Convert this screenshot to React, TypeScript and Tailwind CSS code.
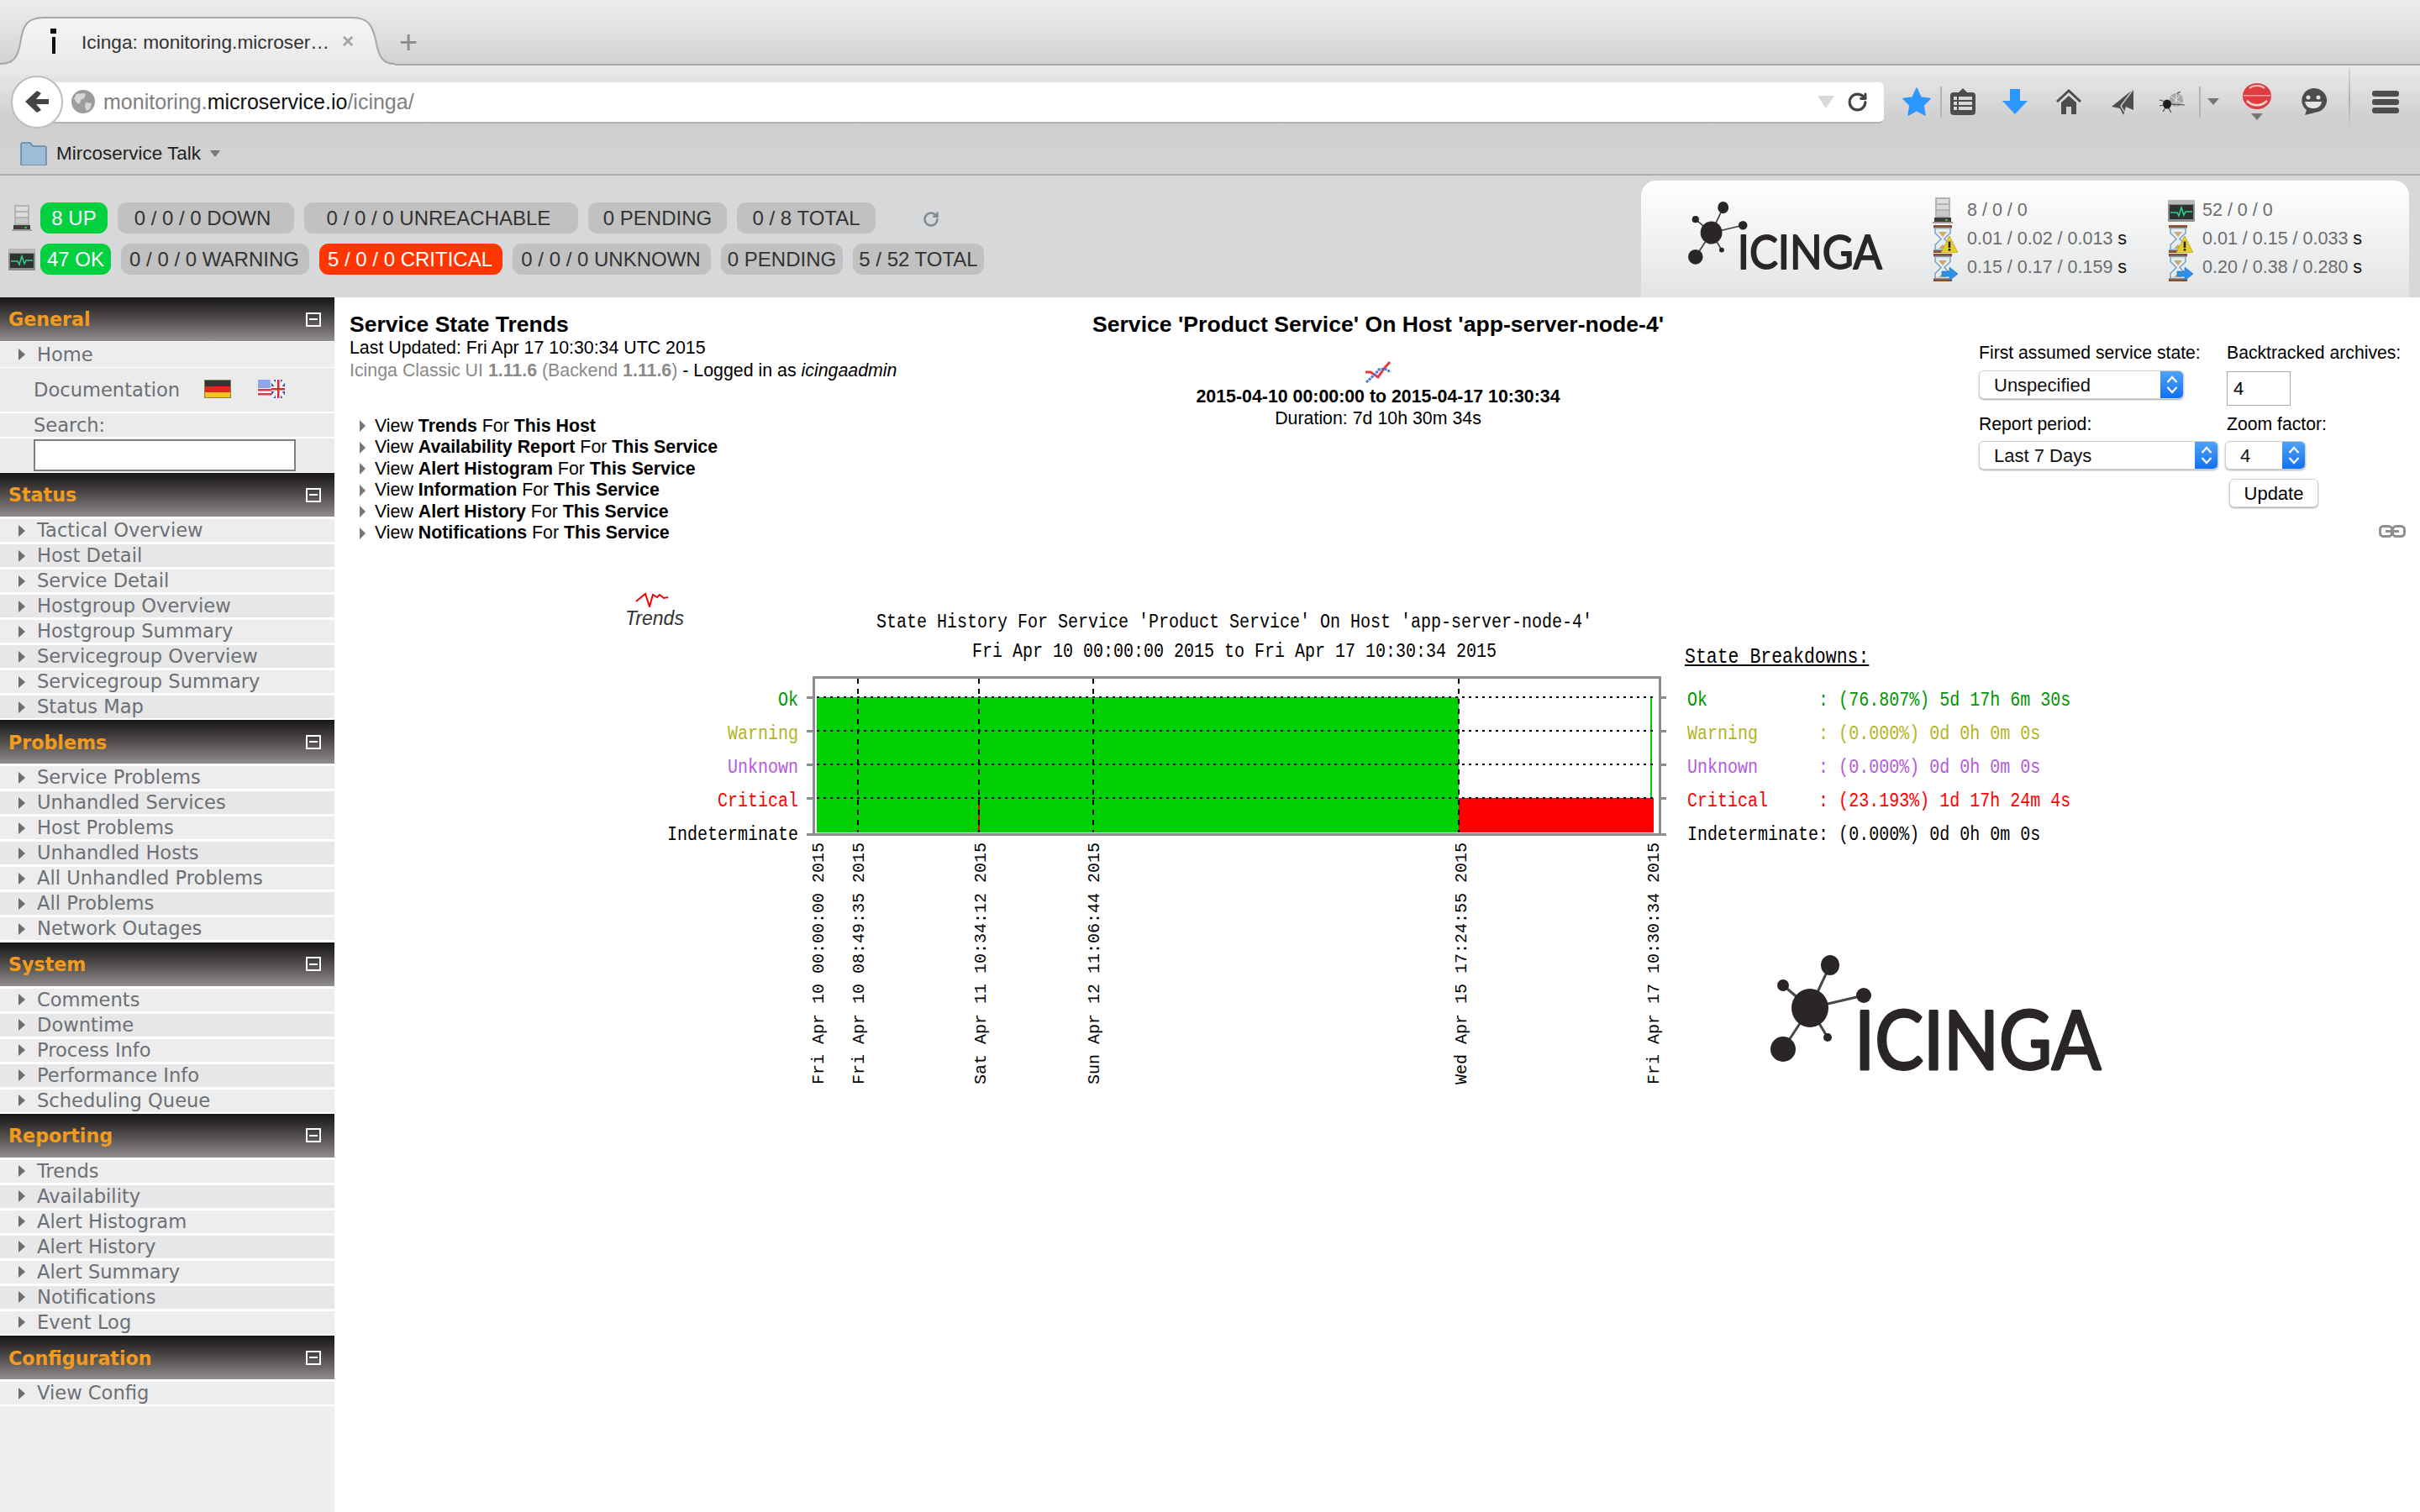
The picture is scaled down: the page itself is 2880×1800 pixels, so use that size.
import { RotateCw } from "lucide-react";

const menu = [
  { title: "Status", items: ["Tactical Overview", "Host Detail", "Service Detail", "Hostgroup Overview", "Hostgroup Summary", "Servicegroup Overview", "Servicegroup Summary", "Status Map"] },
  { title: "Problems", items: ["Service Problems", "Unhandled Services", "Host Problems", "Unhandled Hosts", "All Unhandled Problems", "All Problems", "Network Outages"] },
  { title: "System", items: ["Comments", "Downtime", "Process Info", "Performance Info", "Scheduling Queue"] },
  { title: "Reporting", items: ["Trends", "Availability", "Alert Histogram", "Alert History", "Alert Summary", "Notifications", "Event Log"] },
  { title: "Configuration", items: ["View Config"] },
];

const hostPills = [
  { label: "0 / 0 / 0 DOWN", w: "w-[210px] pr-[8px]" },
  { label: "0 / 0 / 0 UNREACHABLE", w: "w-[326px] pr-[6px]" },
  { label: "0 PENDING", w: "w-[165px]" },
  { label: "0 / 8 TOTAL", w: "w-[165px]" },
];

const links = [
  ["Trends", "This Host"],
  ["Availability Report", "This Service"],
  ["Alert Histogram", "This Service"],
  ["Information", "This Service"],
  ["Alert History", "This Service"],
  ["Notifications", "This Service"],
];

const yLabels = [
  { text: "Ok", y: 833, fill: "#009600" },
  { text: "Warning", y: 873, fill: "#b4b41e" },
  { text: "Unknown", y: 913, fill: "#b45adc" },
  { text: "Critical", y: 953, fill: "#ff0000" },
  { text: "Indeterminate", y: 993, fill: "#000000" },
];

const xLabels = [
  { x: 974, text: "Fri Apr 10 00:00:00 2015" },
  { x: 1022, text: "Fri Apr 10 08:49:35 2015" },
  { x: 1167, text: "Sat Apr 11 10:34:12 2015" },
  { x: 1302, text: "Sun Apr 12 11:06:44 2015" },
  { x: 1739, text: "Wed Apr 15 17:24:55 2015" },
  { x: 1968, text: "Fri Apr 17 10:30:34 2015" },
];

const breakdown = [
  { text: "Ok           : (76.807%) 5d 17h 6m 30s", color: "text-[#009600]" },
  { text: "Warning      : (0.000%) 0d 0h 0m 0s", color: "text-[#b4b41e]" },
  { text: "Unknown      : (0.000%) 0d 0h 0m 0s", color: "text-[#b45adc]" },
  { text: "Critical     : (23.193%) 1d 17h 24m 4s", color: "text-[#ff0000]" },
  { text: "Indeterminate: (0.000%) 0d 0h 0m 0s", color: "text-black" },
];

function IcingaLogo({ className }: { className: string }) {
  return (
    <svg viewBox="0 0 395 165" className={className}>
      <g stroke="#4a4647" strokeWidth="3">
        <line x1="47" y1="63" x2="71" y2="12" />
        <line x1="47" y1="63" x2="111" y2="48" />
        <line x1="47" y1="63" x2="15" y2="36" />
        <line x1="47" y1="63" x2="15" y2="112" />
        <line x1="47" y1="63" x2="68" y2="98" />
      </g>
      <g fill="#2a2627">
        <ellipse cx="47" cy="63" rx="22" ry="23" />
        <ellipse cx="71" cy="12" rx="11" ry="12" />
        <ellipse cx="111" cy="48" rx="9" ry="9" />
        <ellipse cx="15" cy="36" rx="7" ry="7" />
        <ellipse cx="15" cy="112" rx="15" ry="15" />
        <ellipse cx="68" cy="98" rx="5" ry="5" />
      </g>
      <text transform="translate(100 136) scale(0.9 1)" fontFamily="Lato, 'Liberation Sans', sans-serif" fontSize="96" fill="#2a2627" stroke="#2a2627" strokeWidth="3" strokeLinejoin="round">
        ICINGA
      </text>
    </svg>
  );
}

function ServerIcon() {
  return (
    <svg viewBox="0 0 24 31" className="w-[24px] h-[31px]">
      <rect x="3" y="0" width="18" height="27" fill="#b4b4b4" />
      <rect x="5" y="2" width="14" height="5" fill="#dcdcdc" />
      <rect x="5" y="9" width="14" height="5" fill="#dcdcdc" />
      <rect x="5" y="16" width="14" height="6" fill="#cacaca" />
      <rect x="2" y="24" width="20" height="5" fill="#3d3d3d" />
      <rect x="15" y="26" width="3" height="2" fill="#26c244" />
      <rect x="0" y="29" width="24" height="2" fill="#a0a0a0" />
    </svg>
  );
}

function MonitorIcon() {
  return (
    <svg viewBox="0 0 32 26" className="w-[32px] h-[26px]">
      <rect x="0" y="0" width="32" height="26" rx="1" fill="#8d8d8d" />
      <rect x="0" y="0" width="32" height="5" fill="#b8b8b8" />
      <rect x="2" y="6" width="28" height="17" fill="#2c3331" />
      <polyline points="3,15 11,15 13,19 16,9 19,18 21,14 29,14" fill="none" stroke="#35d28c" strokeWidth="1.5" />
    </svg>
  );
}

function Hourglass({ badge }: { badge: "warn" | "arrow" }) {
  return (
    <svg viewBox="0 0 30 33" className="w-[30px] h-[33px]">
      <rect x="1" y="0" width="22" height="3.500" fill="#8a4f2d" />
      <rect x="1" y="29.500" width="22" height="3.500" fill="#8a4f2d" />
      <path d="M3 3.500h18v6l-7 7 7 7v6H3v-6l7-7-7-7z" fill="#e3edf4" stroke="#7fa0bd" strokeWidth="1.500" />
      <path d="M7 8h10l-5 6z" fill="#d2a566" />
      <path d="M7 28h10l-5-5z" fill="#d2a566" />
      {badge === "warn" ? (
        <g>
          <path d="M20 13l10 20H10z" fill="#e8cf2a" stroke="#b79d12" strokeWidth="0.8" />
          <rect x="18.700" y="19.500" width="2.600" height="7.500" fill="#222222" />
          <rect x="18.700" y="28" width="2.600" height="2.600" fill="#222222" />
        </g>
      ) : (
        <path d="M11 21h9v-5l10 8-10 8v-5h-9z" fill="#2f8fe6" stroke="#1d6fbd" strokeWidth="0.6" />
      )}
    </svg>
  );
}

function Pill({ label, w, tone = "gray" }: { label: string; w: string; tone?: "gray" | "green" | "red" }) {
  const color = tone === "green" ? "bg-[#03d03f] text-white" : tone === "red" ? "bg-[#ff3600] text-white" : "bg-[#c1c1c2] text-[#333333]";
  return <div className={`${w} h-[37px] rounded-[11px] flex items-center justify-center text-[24px] whitespace-nowrap ${color}`}>{label}</div>;
}

function ToolbarIcons() {
  return (
    <div className="flex items-center">
      <svg viewBox="0 0 34 34" className="w-[34px] h-[34px] ml-[22px]">
        <path d="M17 1l5 11 11 1.500-8 8 2 11.500-10-5.500-10 5.500 2-11.500-8-8L12 12z" fill="#2b97ff" stroke="#2b97ff" strokeLinejoin="round" strokeWidth="1.500" />
      </svg>
      <div className="w-[2px] h-[37px] ml-[11px] bg-[#b5b5b5]" />
      <svg viewBox="0 0 30 32" className="w-[30px] h-[32px] ml-[10px]">
        <path d="M15 0l5 5h6a4 4 0 0 1 4 4v19a4 4 0 0 1-4 4H4a4 4 0 0 1-4-4V9a4 4 0 0 1 4-4h6z" fill="#4d4d4d" />
        <g fill="#d8d8d8">
          <rect x="4" y="10" width="4" height="4" />
          <rect x="10" y="10" width="16" height="4" />
          <rect x="4" y="16" width="4" height="4" />
          <rect x="10" y="16" width="16" height="4" />
          <rect x="4" y="22" width="4" height="4" />
          <rect x="10" y="22" width="16" height="4" />
        </g>
      </svg>
      <svg viewBox="0 0 30 30" className="w-[30px] h-[30px] ml-[32px]">
        <path d="M9 0h12v14h9L15 30 0 14h9z" fill="#2b97ff" />
      </svg>
      <svg viewBox="0 0 30 30" className="w-[30px] h-[30px] ml-[34px]">
        <path d="M15 0L30 14l-2 2L15 4 2 16l-2-2z" fill="#4d4d4d" />
        <path d="M15 8l9 8v14h-6V21h-6v9H6V16z" fill="#4d4d4d" />
      </svg>
      <svg viewBox="0 0 32 32" className="w-[32px] h-[32px] ml-[34px]">
        <path d="M28 1L2 22l10 2 4 8 3-10 9 4z" fill="#4d4d4d" />
        <path d="M28 1L13 21l4 7" fill="none" stroke="#cfcfcf" strokeWidth="1.500" />
      </svg>
      <svg viewBox="0 0 32 25" className="w-[32px] h-[25px] ml-[26px]">
        <ellipse cx="21" cy="10" rx="8" ry="8" fill="#a8a8a8" />
        <path d="M15 6l12 8M17 14l8-9M21 3v14" stroke="#e8e8e8" strokeWidth="1" />
        <ellipse cx="10" cy="15" rx="5" ry="5.500" fill="#1c1c1c" />
        <g stroke="#444444" strokeWidth="1.200" fill="none">
          <path d="M8 12L1 10M6 16l-5 1M8 19l-3 5M12 20l3 5M14 15l17 1M22 2l4-2" />
        </g>
      </svg>
      <div className="w-[2px] h-[37px] ml-[16px] bg-[#b5b5b5]" />
      <div className="ml-[8px] w-0 h-0 border-x-[7px] border-x-transparent border-t-[8px] border-t-[#777777]" />
      <div className="ml-[28px] w-[34px] flex flex-col items-center gap-[5px]">
        <svg viewBox="0 0 34 31" className="w-[34px] h-[31px]">
          <ellipse cx="17" cy="15.500" rx="17" ry="15.500" fill="#df3c40" />
          <path d="M8 6c5-4 13-4 18 0" fill="none" stroke="#f4c2c3" strokeWidth="2" />
          <path d="M5 21c7 7 17 7 24 0" fill="none" stroke="#f6d4d5" strokeWidth="2.500" />
          <rect x="1" y="14" width="32" height="1.500" fill="#eda0a2" />
        </svg>
        <div className="w-0 h-0 border-x-[7px] border-x-transparent border-t-[8px] border-t-[#777777]" />
      </div>
      <svg viewBox="0 0 34 32" className="w-[34px] h-[32px] ml-[33px]">
        <path d="M17 0a16 14.500 0 0 1 6 28L7 32l2-6A14.500 14.500 0 0 1 17 0z" fill="#4d4d4d" />
        <circle cx="11" cy="11" r="2.500" fill="#e4e4e4" />
        <circle cx="23" cy="11" r="2.500" fill="#e4e4e4" />
        <path d="M7 16h20c-1 6-5 8-10 8s-9-2-10-8z" fill="#e4e4e4" />
      </svg>
      <div className="w-[2px] h-[80px] ml-[25px] bg-linear-to-b from-[#d5d5d5] via-[#b0b0b0] to-[#d5d5d5]" />
      <div className="w-[32px] ml-[26px] flex flex-col gap-[3px]">
        <div className="h-[7px] rounded-[3px] bg-[#4d4d4d]" />
        <div className="h-[7px] rounded-[3px] bg-[#4d4d4d]" />
        <div className="h-[7px] rounded-[3px] bg-[#4d4d4d]" />
      </div>
    </div>
  );
}

function BrowserChrome() {
  return (
    <div className="font-['Liberation_Sans',sans-serif]">
      {/* tab strip */}
      <div className="h-[78px] flex items-end border-b-2 border-[#a9a9a9] bg-linear-to-b from-[#ededed] to-[#d3d3d3]">
        <div className="relative w-[470px] h-[58px] -mb-[2px] flex items-center">
          <svg viewBox="0 0 470 58" className="absolute inset-0 w-full h-full">
            <defs>
              <linearGradient id="tabFill" x1="0" y1="0" x2="0" y2="1">
                <stop offset="0" stopColor="#f5f5f5" />
                <stop offset="1" stopColor="#e9e9e9" />
              </linearGradient>
            </defs>
            <path d="M0 56c16 0 21-8 24-24C27 10 32 1 52 1h368c18 0 24 9 28 31 3 16 8 24 22 24v2H0z" fill="url(#tabFill)" />
            <path d="M0 56c16 0 21-8 24-24C27 10 32 1 52 1h368c18 0 24 9 28 31 3 16 8 24 22 24" fill="none" stroke="#a8a8a8" strokeWidth="2" />
          </svg>
          <svg viewBox="0 0 10 30" className="relative ml-[59px] w-[10px] h-[30px]">
            <rect x="1" y="0" width="7" height="6" fill="#111111" />
            <rect x="3" y="10" width="4" height="20" fill="#111111" />
          </svg>
          <span className="relative ml-[28px] mt-[3px] text-[22.700px] text-[#333333] whitespace-nowrap">Icinga: monitoring.microser…</span>
          <span className="relative ml-[15px] text-[24px] font-bold text-[#a3a3a3]">×</span>
        </div>
        <span className="ml-[5px] mb-[4px] text-[38px] leading-[44px] text-[#8c8c8c]">+</span>
      </div>

      {/* nav + bookmarks */}
      <div className="h-[131px] border-b-[2px] border-[#adadad] bg-linear-to-b from-[#ebebeb] via-[#cfcfcf] to-[#d3d3d3]">
        <div className="h-[86px] flex items-center">
          <div className="relative z-10 ml-[13px] w-[62px] h-[63px] rounded-full bg-white border-2 border-[#bdbdbd] flex items-center justify-center">
            <svg viewBox="0 0 28 26" className="w-[28px] h-[26px]">
              <path d="M14 0l5 3-6 7h15v6H13l6 7-5 3L0 13z" fill="#444444" />
            </svg>
          </div>
          <div className="-ml-[15px] mt-[2px] w-[2182px] h-[49px] bg-white rounded-r-[6px] border-b-2 border-[#b3b3b3] flex items-center pl-[25px] pr-[19px]">
            <svg viewBox="0 0 28 28" className="w-[28px] h-[28px]">
              <circle cx="14" cy="14" r="14" fill="#9c9c9c" />
              <path d="M6 5c4 0 8-2 11 0l-2 5-4 2-1 5-4-2-3-5zM17 15l7 1-2 7-4 2-2-5z" fill="#d8d8d8" />
            </svg>
            <span className="ml-[10px] mt-[2px] text-[25px] whitespace-nowrap text-[#808080]">
              monitoring.<span className="text-[#111111]">microservice.io</span>/icinga/
            </span>
            <div className="ml-auto w-0 h-0 border-x-[10px] border-x-transparent border-t-[15px] border-t-[#d9d9d9]" />
            <RotateCw className="ml-[15px] w-[25px] h-[25px] text-[#444444]" strokeWidth={3} />
          </div>
          <ToolbarIcons />
        </div>
        <div className="h-[38px] flex items-center pl-[24px]">
          <svg viewBox="0 0 32 28" className="w-[32px] h-[28px]">
            <path d="M1 3a2 2 0 0 1 2-2h9l3 4h14a2 2 0 0 1 2 2v19a2 2 0 0 1-2 2H3a2 2 0 0 1-2-2z" fill="#9dbcd6" stroke="#5f87a8" strokeWidth="1.500" />
          </svg>
          <span className="ml-[11px] text-[22.500px] text-[#222222] whitespace-nowrap">Mircoservice Talk</span>
          <div className="ml-[11px] w-0 h-0 border-x-[6px] border-x-transparent border-t-[8px] border-t-[#777777]" />
        </div>
      </div>
    </div>
  );
}

function StatusStat({ icon, first, rows }: { icon: React.ReactNode; first: string; rows: { badge: "warn" | "arrow"; text: string }[] }) {
  return (
    <div className="w-[280px] flex flex-col">
      <div className="h-[33px] flex items-center">
        <div className="w-[41px]">{icon}</div>
        <span className="text-[21.500px] text-[#6d6d6d] whitespace-nowrap">{first}</span>
      </div>
      {rows.map((r) => (
        <div key={r.text} className="h-[34px] flex items-center">
          <div className="w-[41px] flex items-center">
            <Hourglass badge={r.badge} />
          </div>
          <span className="text-[21.500px] text-[#6d6d6d] whitespace-nowrap">
            {r.text} <span className="text-[#111111]">s</span>
          </span>
        </div>
      ))}
    </div>
  );
}

function StatusBar() {
  return (
    <div className="h-[145px] flex bg-[#d7d8da] font-['Liberation_Sans',sans-serif]">
      <div className="pt-[32px] flex flex-col gap-[12px]">
        <div className="h-[37px] flex items-center">
          <div className="w-[48px] pl-[14px]">
            <ServerIcon />
          </div>
          <div className="flex gap-[12px]">
            <Pill label="8 UP" w="w-[80px]" tone="green" />
            {hostPills.map((p) => (
              <Pill key={p.label} label={p.label} w={p.w} />
            ))}
          </div>
          <RotateCw className="ml-[56px] mt-[3px] w-[20px] h-[20px] text-[#7d8a92]" strokeWidth={3} />
        </div>
        <div className="h-[37px] flex items-center">
          <div className="w-[48px] pl-[10px]">
            <MonitorIcon />
          </div>
          <div className="flex gap-[12px]">
            <Pill label="47 OK" w="w-[84px]" tone="green" />
            <Pill label="0 / 0 / 0 WARNING" w="w-[224px] pr-[2px]" />
            <Pill label="5 / 0 / 0 CRITICAL" w="w-[218px] pr-[2px]" tone="red" />
            <Pill label="0 / 0 / 0 UNKNOWN" w="w-[236px] pr-[2px]" />
            <Pill label="0 PENDING" w="w-[145px]" />
            <Pill label="5 / 52 TOTAL" w="w-[156px]" />
          </div>
        </div>
      </div>
      <div className="ml-auto mr-[13px] mt-[6px] w-[914px] rounded-t-[18px] bg-linear-to-b from-[#ffffff] to-[#e2e4e6] flex pl-[56px] pt-[19px]">
        <IcingaLogo className="w-[232px] h-[97px] mt-[6px] shrink-0" />
        <div className="ml-[59px] flex">
          <StatusStat
            icon={<ServerIcon />}
            first="8 / 0 / 0"
            rows={[
              { badge: "warn", text: "0.01 / 0.02 / 0.013" },
              { badge: "arrow", text: "0.15 / 0.17 / 0.159" },
            ]}
          />
          <StatusStat
            icon={<MonitorIcon />}
            first="52 / 0 / 0"
            rows={[
              { badge: "warn", text: "0.01 / 0.15 / 0.033" },
              { badge: "arrow", text: "0.20 / 0.38 / 0.280" },
            ]}
          />
        </div>
      </div>
    </div>
  );
}

function MenuHeader({ title }: { title: string }) {
  return (
    <div className="h-[52px] flex items-center pl-[10px] pr-[16px] bg-linear-to-b from-[#191616] to-[#918d8d]">
      <span className="mt-[2px] text-[22.200px] font-bold text-[#f39b1c]">{title}</span>
      <div className="ml-auto w-[18px] h-[17px] border-[2px] border-white flex items-center justify-center">
        <div className="w-[10px] h-[2px] bg-white" />
      </div>
    </div>
  );
}

function MenuTriangle() {
  return <div className="w-0 h-0 border-y-[7px] border-y-transparent border-l-[8px] border-l-[#6e6e6e]" />;
}

function MenuItem({ label, odd }: { label: string; odd: boolean }) {
  return (
    <div className={`mt-[3px] h-[27px] flex items-center pl-[22px] ${odd ? "bg-[#e7e7e7]" : "bg-[#ededed]"}`}>
      <MenuTriangle />
      <span className="ml-[14px] mt-[1px] text-[22.600px] text-[#6c7076] whitespace-nowrap">{label}</span>
    </div>
  );
}

function Sidebar() {
  return (
    <div className="w-[398px] shrink-0 flex flex-col bg-white font-['DejaVu_Sans',sans-serif]">
      <MenuHeader title="General" />
      <div className="mt-px h-[30px] flex items-center pl-[22px] bg-[#ededed]">
        <MenuTriangle />
        <span className="ml-[14px] mt-[2px] text-[22.600px] text-[#6c7076]">Home</span>
      </div>
      <div className="mt-px h-[52px] flex items-center pl-[40px] bg-[#ebebeb]">
        <span className="w-[203px] mt-[2px] text-[22.600px] text-[#6c7076]">Documentation</span>
        <svg viewBox="0 0 32 22" className="-mt-[2px] w-[32px] h-[22px]">
          <rect width="32" height="8" fill="#333333" />
          <rect y="8" width="32" height="7" fill="#e0271e" />
          <rect y="15" width="32" height="7" fill="#f2c31d" />
          <rect width="32" height="22" fill="none" stroke="#85805a" strokeWidth="2" />
        </svg>
        <svg viewBox="0 0 32 22" className="ml-[32px] -mt-[2px] w-[32px] h-[22px]">
          <rect width="32" height="22" fill="#eeeef4" />
          <g fill="#d0404a">
            <rect y="11" width="16" height="2.500" />
            <rect y="16" width="16" height="2.500" />
          </g>
          <rect width="15" height="10" fill="#8fa6e8" />
          <rect x="16" width="16" height="22" fill="#3c4c9c" />
          <path d="M16 0l16 22M32 0L16 22" stroke="#f2f2f2" strokeWidth="4" />
          <rect x="21" width="6" height="22" fill="#f2f2f2" />
          <rect x="16" y="8" width="16" height="6" fill="#f2f2f2" />
          <rect x="23" width="2.500" height="22" fill="#d0303a" />
          <rect x="16" y="10" width="16" height="2.500" fill="#d0303a" />
        </svg>
      </div>
      <div className="mt-[2px] h-[28px] flex items-center pl-[40px] bg-[#ebebeb]">
        <span className="mt-[2px] text-[22.600px] text-[#6c7076]">Search:</span>
      </div>
      <div className="mt-[2px] h-[40px] flex items-center pl-[40px] bg-[#ebebeb]">
        <div className="w-[312px] h-[38px] bg-white border-[2px] border-[#808080]" />
      </div>
      <div className="h-px" />
      {menu.map((section) => (
        <div key={section.title} className="pb-[2.300px]">
          <MenuHeader title={section.title} />
          {section.items.map((item, i) => (
            <MenuItem key={item} label={item} odd={i % 2 === 1} />
          ))}
        </div>
      ))}
      <div className="flex-1 bg-[#eeeeee]" />
    </div>
  );
}

function SelectBox({ label, w }: { label: string; w: string }) {
  return (
    <div className={`${w} h-[34px] flex rounded-[6px] bg-white border border-[#d2d2d2] shadow-[0_1px_2px_rgba(0,0,0,0.35)] overflow-hidden`}>
      <span className="flex-1 flex items-center pl-[17px] pt-[2px] text-[22px] text-[#111111]">{label}</span>
      <div className="w-[27px] flex items-center justify-center bg-linear-to-b from-[#4da2f8] to-[#1070f0]">
        <svg viewBox="0 0 14 24" className="w-[14px] h-[24px]">
          <path d="M1.500 9L7 3l5.500 6M1.500 15L7 21l5.500-6" fill="none" stroke="#ffffff" strokeWidth="2.200" />
        </svg>
      </div>
    </div>
  );
}

function TrendsLogo() {
  return (
    <div className="relative z-10 w-[50px] shrink-0 flex flex-col">
      <svg viewBox="0 0 100 18" className="w-[100px] h-[18px] max-w-none mt-[5px] shrink-0">
        <polyline points="27,11 33,6 38,2 43,17 47,3 52,6 55,3 60,7 65,6" fill="none" stroke="#f00000" strokeWidth="2" />
      </svg>
      <span className="pl-[14px] text-[23px] leading-[26px] italic text-[#333333] whitespace-nowrap">Trends</span>
    </div>
  );
}

function Chart() {
  return (
    <svg viewBox="780 700 1210 600" className="w-[1210px] h-[600px] shrink-0" fontFamily="'Liberation Mono', monospace" fontSize="23">
      <text transform="translate(1469 747) scale(0.87 1)" textAnchor="middle">State History For Service 'Product Service' On Host 'app-server-node-4'</text>
      <text transform="translate(1469 782) scale(0.87 1)" textAnchor="middle">Fri Apr 10 00:00:00 2015 to Fri Apr 17 10:30:34 2015</text>

      <rect x="972" y="830" width="764" height="161" fill="#00d000" />
      <rect x="1736" y="950" width="232" height="41" fill="#ff0000" />
      <rect x="1964" y="830" width="2" height="120" fill="#00d000" />
      <rect x="1164" y="950" width="2" height="41" fill="#ff0000" />

      <g stroke="#8c8c8c" strokeWidth="3" fill="none" shapeRendering="crispEdges">
        <rect x="968" y="806" width="1007" height="187" />
        <path d="M960 830h8M960 870h8M960 910h8M960 950h8M960 993h8M1975 830h8M1975 870h8M1975 910h8M1975 950h8M1975 993h8" />
      </g>
      <g stroke="#000000" strokeWidth="2" shapeRendering="crispEdges">
        {[830, 870, 910, 950].map((y) => (
          <line key={y} x1="972" x2="1968" y1={y} y2={y} strokeDasharray="3 5" />
        ))}
        {[1021, 1165, 1301, 1736].map((x) => (
          <line key={x} x1={x} x2={x} y1="808" y2="991" strokeDasharray="6 6" />
        ))}
      </g>

      {yLabels.map((l) => (
        <text key={l.text} transform={`translate(950 ${l.y + 7}) scale(0.87 1)`} textAnchor="end" fill={l.fill}>{l.text}</text>
      ))}
      <g fontSize="20">
        {xLabels.map((l) => (
          <text key={l.x} transform={`translate(${l.x + 6} 1291) rotate(-90)`}>{l.text}</text>
        ))}
      </g>
    </svg>
  );
}

function MainContent() {
  return (
    <div className="flex-1 flex flex-col bg-white text-black font-['Liberation_Sans',sans-serif]">
      <div className="h-[346px] flex">
        <div className="w-[901px] shrink-0 pl-[18px] pt-[16px]">
          <div className="text-[26.500px] leading-[32px] font-bold">Service State Trends</div>
          <div className="-mt-[1.500px] text-[21.350px] leading-[27px]">Last Updated: Fri Apr 17 10:30:34 UTC 2015</div>
          <div className="text-[21.350px] leading-[27px] text-[#8a8a8a]">
            Icinga Classic UI <b>1.11.6</b> (Backend <b>1.11.6</b>) <span className="text-black">- Logged in as <i>icingaadmin</i></span>
          </div>
          <div className="mt-[40px]">
            {links.map(([what, target]) => (
              <div key={what} className="h-[25.500px] flex items-center text-[21.350px] leading-[25.500px]">
                <div className="ml-[12px] mr-[11px] w-0 h-0 border-y-[7px] border-y-transparent border-l-[7px] border-l-[#777777]" />
                View&nbsp;<b>{what}</b>&nbsp;For&nbsp;<b>{target}</b>
              </div>
            ))}
          </div>
        </div>

        <div className="w-[682px] shrink-0 pt-[16px] flex flex-col items-center">
          <div className="text-[26.600px] leading-[32px] font-bold whitespace-nowrap">Service 'Product Service' On Host 'app-server-node-4'</div>
          <svg viewBox="0 0 32 26" className="w-[32px] h-[26px] mt-[28px]">
            <polyline points="1,13 7,13 16,19 23,9 30,1" fill="none" stroke="#ef3340" strokeWidth="3" />
            <polyline points="2,25 12,16 17,10 24,9 31,13" fill="none" stroke="#4a78c8" strokeWidth="3" strokeDasharray="3 1" />
          </svg>
          <div className="mt-[3px] text-[21.350px] leading-[26px] font-bold whitespace-nowrap">2015-04-10 00:00:00 to 2015-04-17 10:30:34</div>
          <div className="text-[21.350px] leading-[26px] whitespace-nowrap">Duration: 7d 10h 30m 34s</div>
        </div>

        <div className="ml-[374px] pr-[17px] flex-1 flex flex-col text-[21.200px] leading-[26px]">
          <div className="flex pt-[53px]">
            <div className="w-[295px] shrink-0">
              <div className="whitespace-nowrap">First assumed service state:</div>
              <div className="mt-[8px]">
                <SelectBox label="Unspecified" w="w-[244px]" />
              </div>
              <div className="mt-[17px]">Report period:</div>
              <div className="mt-[7px]">
                <SelectBox label="Last 7 Days" w="w-[285px]" />
              </div>
            </div>
            <div className="flex-1">
              <div className="whitespace-nowrap">Backtracked archives:</div>
              <div className="mt-[9px] w-[76px] h-[41px] border border-[#aaaaaa] flex items-center pl-[7px] text-[22px]">4</div>
              <div className="mt-[9px]">Zoom factor:</div>
              <div className="mt-[7px] -ml-[2px]">
                <SelectBox label="4" w="w-[96px]" />
              </div>
              <div className="mt-[11px] ml-[3px] pt-[2px] w-[106px] h-[34px] rounded-[6px] bg-white border border-[#d2d2d2] shadow-[0_1px_2px_rgba(0,0,0,0.35)] flex items-center justify-center text-[22px]">Update</div>
            </div>
          </div>
          <svg viewBox="0 0 32 15" className="self-end mt-[21px] w-[32px] h-[15px]">
            <g fill="none" stroke="#8f8f8f" strokeWidth="3">
              <rect x="1.500" y="1.500" width="14" height="12" rx="4" />
              <rect x="16.500" y="1.500" width="14" height="12" rx="4" />
              <line x1="8" y1="7.500" x2="24" y2="7.500" />
            </g>
          </svg>
        </div>
      </div>

      <div className="flex pl-[332px]">
        <TrendsLogo />
        <Chart />
        <div className="pl-[15px] pt-[68px] flex flex-col font-['Liberation_Mono',monospace]">
          <div className="h-[30px] text-[25px] leading-[30px] underline underline-offset-2 whitespace-pre scale-x-[0.86] origin-left">State Breakdowns:</div>
          <div className="mt-[16px] pl-[3px] flex flex-col text-[23px]">
            {breakdown.map((row) => (
              <div key={row.text} className={`h-[40px] leading-[40px] whitespace-pre scale-x-[0.87] origin-left ${row.color}`}>{row.text}</div>
            ))}
          </div>
          <IcingaLogo className="ml-[102px] mt-[123px] w-[395px] h-[165px]" />
        </div>
      </div>
    </div>
  );
}

export default function App() {
  return (
    <div className="w-[2880px] h-[1800px] flex flex-col overflow-hidden bg-white">
      <BrowserChrome />
      <StatusBar />
      <div className="flex-1 flex min-h-0">
        <Sidebar />
        <MainContent />
      </div>
    </div>
  );
}
